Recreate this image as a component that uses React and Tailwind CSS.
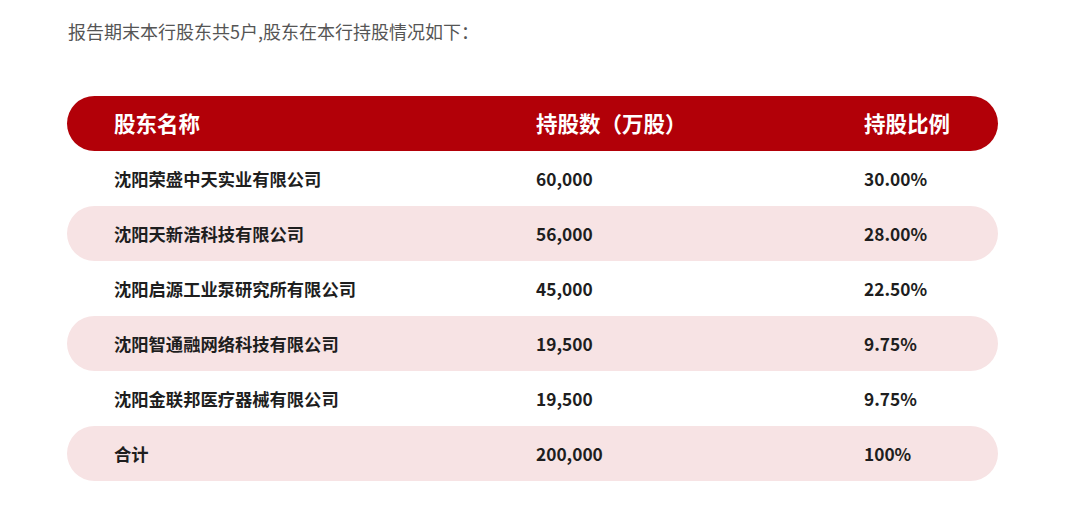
const rows = [
  ["沈阳荣盛中天实业有限公司", "60,000", "30.00%"],
  ["沈阳天新浩科技有限公司", "56,000", "28.00%"],
  ["沈阳启源工业泵研究所有限公司", "45,000", "22.50%"],
  ["沈阳智通融网络科技有限公司", "19,500", "9.75%"],
  ["沈阳金联邦医疗器械有限公司", "19,500", "9.75%"],
  ["合计", "200,000", "100%"],
];

export default function App() {
  return (
    <div
      className="w-[1080px] h-[516px] bg-white overflow-hidden"
      style={{ fontFamily: '"Noto Sans CJK SC", "Noto Sans", sans-serif' }}
    >
      <p className="pl-[68px] pt-[18px] text-[18px] leading-[26px] text-[#555555]">
        报告期末本行股东共5户,股东在本行持股情况如下：
      </p>

      <div className="ml-[67px] mt-[52px] w-[931px] flex flex-col">
        {/* header */}
        <div className="grid grid-cols-[422px_328px_1fr] items-center h-[55px] pl-[47px] rounded-full bg-[#b20008] text-white text-[21.5px] font-bold">
          <span>股东名称</span>
          <span>持股数（万股）</span>
          <span>持股比例</span>
        </div>

        {rows.map((r, i) => (
          <div
            key={i}
            className={
              "grid grid-cols-[422px_328px_1fr] items-center h-[55px] pl-[47px] rounded-full text-[17.3px] font-bold text-[#1e1e1e] " +
              (i % 2 === 1 ? "bg-[#f7e3e4]" : "bg-white")
            }
          >
            <span>{r[0]}</span>
            <span>{r[1]}</span>
            <span>{r[2]}</span>
          </div>
        ))}
      </div>
    </div>
  );
}
